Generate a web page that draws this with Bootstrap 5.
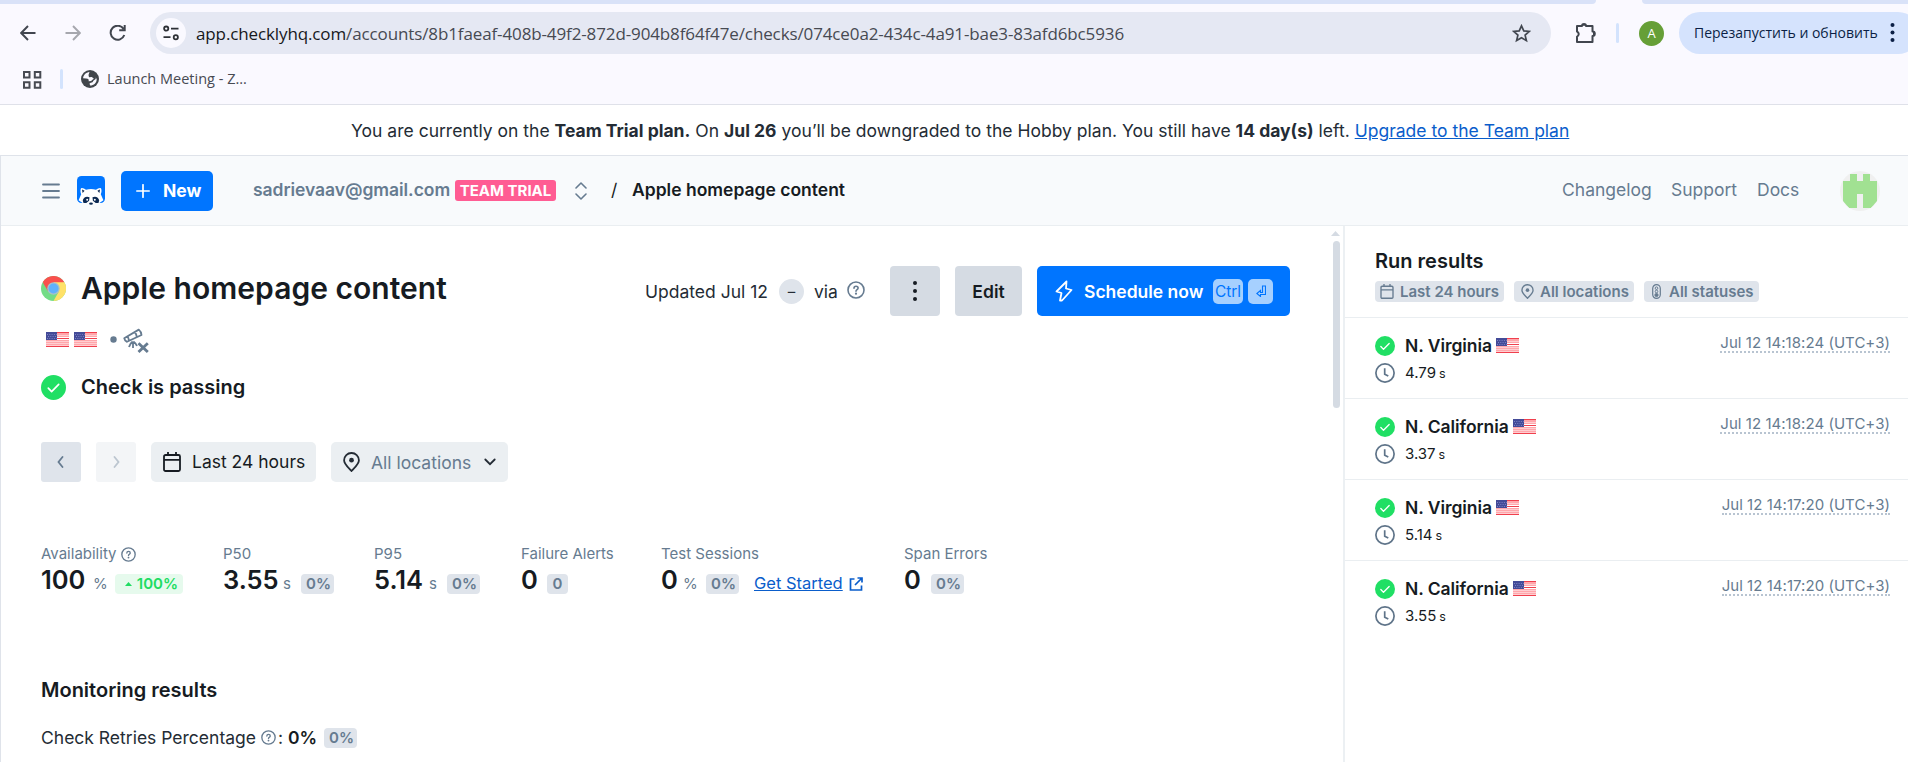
<!DOCTYPE html>
<html lang="en">
<head>
<meta charset="utf-8">
<title>Apple homepage content</title>
<link href="https://cdn.jsdelivr.net/npm/bootstrap@5.3.0/dist/css/bootstrap.min.css" rel="stylesheet">
<style>
:root{--ink:#161b22;--muted:#667b90;--blue:#0075ff;--link:#0a5dcb;--chip:#dfe4eb;--line:#eaeef1}
html,body{height:100%}
body{font-family:Inter,"Liberation Sans",sans-serif;font-size:17.5px;line-height:25px;color:#242c35;background:#fff;overflow:hidden;white-space:nowrap}
svg{display:block;flex:none}
a{color:var(--link)}
.ui{font-family:"Open Sans","Noto Sans",sans-serif}
.tabstrip{height:4px;background:#faf9ff}
.tabstrip span{background:#d9e2f8;height:4px}
.browser{background:#faf9ff;height:105px;border-bottom:1px solid #dfe1e9}
.tools{height:58px;padding-top:8px}
.omni{margin-left:150px;width:1401px;height:42px;background:#e5e8f3;border-radius:21px;padding:0 20px 0 6px}
.omni-btn{width:30px;height:30px;border-radius:50%;background:#faf9ff}
.url{margin-left:10px;font-size:17px;letter-spacing:-.12px;color:#474a52}
.url b{font-weight:400;color:#17181c}
.vbar{width:3px;height:20px;border-radius:2px;background:#d3e3fd}
.who{width:25px;height:25px;border-radius:50%;background:#669f37;color:#fff;font-size:13px}
.restart{width:240px;height:42px;border-radius:21px;background:#d5e3fd;color:#0b1f45;font-size:14px;padding-left:15px;margin-right:-11px}
.marks{height:42px;font-size:14.5px;color:#474a52}
.trial{height:51px;border-bottom:1px solid #dfe3ea}
.frame{border-left:1px solid #dfe3ea;height:606px}
.topbar{height:70px;background:#f8fafc;border-bottom:1px solid var(--line)}
.topbar .crumb{margin-top:-2px}
.btn-b{background:var(--blue);color:#fff;font-weight:700;border-radius:5px}
.tag{background:#ff5c93;color:#fff;font-weight:700;font-size:15px;line-height:21px;height:21px;border-radius:3px;width:101px;text-align:center}
.muted{color:var(--muted)}
.ink{color:var(--ink)}
.sb{font-weight:600}
.mainpane{width:1344px;border-right:2px solid #ecf0f3;height:536px}
.work{width:1249px;margin-left:40px}
.h-title{font-size:30px;line-height:36px;font-weight:600;color:var(--ink);letter-spacing:.03px}
.h-sub{font-size:20px;line-height:25px;font-weight:600;color:var(--ink)}
.b-gray{height:50px;background:#d5dbe3;border-radius:4px;color:var(--ink);font-weight:600}
.b-run{height:50px;width:253px;padding-left:18px}
.keycap{height:25px;background:#a6d0ff;color:var(--blue);border-radius:5px;font-size:15.5px;font-weight:400}
.dash{width:25px;height:25px;border-radius:50%;background:var(--chip);font-size:15px}
.sq{width:40px;height:40px;border-radius:3px}
.pick{height:40px;background:#ebeff2;border-radius:5px}
.lbl{font-size:15px;line-height:20px;height:20px;color:var(--muted)}
.val{font-size:25.5px;line-height:30px;font-weight:600;color:var(--ink)}
.unit{font-size:15px;color:var(--muted)}
.chip{background:var(--chip);color:var(--muted);font-weight:600;font-size:15px;line-height:20px;height:20px;border-radius:4px;padding:0 5px;text-align:center}
.chip-g{background:#e6faed;color:#20dc62;padding-right:5px}
.track{width:13px;padding-top:5px}
.thumb{width:7px;height:167px;border-radius:4px;background:#d5dbe3}
.run{height:81px;border-top:1px solid var(--line);padding:18px 18px 0 30px}
.fchip{background:var(--chip);color:var(--muted);font-weight:600;font-size:15px;height:21px;border-radius:4px;padding:0 5px}
.stamp{font-size:15px;line-height:14px;color:var(--muted);padding-bottom:1px;border-bottom:2px dotted #b8c4d1;height:17px;letter-spacing:.04px}
</style>
</head>
<body>
<svg width="0" height="0" class="position-absolute">
<defs>
<symbol id="us" viewBox="0 0 23 15"><path fill="#ffa6ab" d="M0 0h23v15H0z"/><path stroke="#fff" stroke-opacity=".45" d="M0 3.500h23M0 9.500h23M0 11.500h23M0 13.500h23"/><path stroke="#f0404e" d="M0 .5h23M0 6.500h23M0 14.500h23"/><path stroke="#fff" d="M0 5.500h23M0 7.500h23"/><path fill="#444b98" d="M0 0h11v8H0z"/><path stroke="#7c83c4" stroke-dasharray="1 1.300" d="M1 2.500h10M2 4.500h9M1 6.500h10"/></symbol>
<symbol id="ok" viewBox="0 0 24 24"><circle cx="12" cy="12" r="12" fill="#20df64"/><path d="M7 12.600l3.200 3.400L17 9" fill="none" stroke="#fff" stroke-width="1.600" stroke-linecap="round" stroke-linejoin="round"/></symbol>
<symbol id="clock" viewBox="0 0 20 20"><g fill="none" stroke="#5f7489" stroke-width="1.700"><circle cx="10" cy="10" r="9.100"/><path d="M9.700 5.200v6l3.600 1.800"/></g></symbol>
<symbol id="help" viewBox="0 0 18 18"><g fill="none" stroke="#667b90" stroke-width="1.600"><circle cx="9" cy="9" r="8"/><path d="M7 7.200c0-2.600 4.100-2.500 4.100-.1C11.100 8.700 9 8.600 9 10.200" stroke-linecap="round"/></g><circle cx="9" cy="12.700" r="1.100" fill="#667b90"/></symbol>
<symbol id="cal" viewBox="0 0 18 20"><g fill="none" stroke="currentColor" stroke-width="1.800" stroke-linejoin="round"><rect x="1" y="3" width="16" height="16" rx="1.500"/><path d="M1 7.800h16M5 0v4M13 0v4"/></g></symbol>
<symbol id="pin" viewBox="0 0 17 20"><path d="M8.500 1a7.300 7.300 0 0 1 7.400 7.300c0 4.200-4.900 7.700-7.400 10.700C6 16 1.100 12.500 1.100 8.300A7.300 7.300 0 0 1 8.500 1z" fill="none" stroke="currentColor" stroke-width="1.800"/><circle cx="8.500" cy="8.200" r="2.400" fill="currentColor"/></symbol>
</defs>
</svg>

<header class="browser ui">
  <div class="tabstrip d-flex">
    <span style="width:1596px;border-radius:0 0 8px 0"></span><span class="ms-auto" style="width:266px;border-radius:0 0 0 8px"></span>
  </div>
  <div class="tools d-flex position-relative">
    <div class="position-absolute d-flex" style="left:20px;top:21px">
      <svg width="16" height="16" viewBox="0 0 16 16" fill="none" stroke="#41464f" stroke-width="1.900"><path d="M15.500 8H1.500M8 1L1.200 8 8 15"/></svg>
      <svg style="margin-left:29px" width="16" height="16" viewBox="0 0 16 16" fill="none" stroke="#a6a7ae" stroke-width="1.900"><path d="M.5 8h14M8 1l6.800 7L8 15"/></svg>
      <svg style="margin-left:28px" width="18" height="16" viewBox="0 0 18 16" fill="none" stroke="#41464f" stroke-width="2"><path d="M14.600 4A7 7 0 1 0 15.300 10M15.700 0v5.300h-5.500"/></svg>
    </div>
    <div class="omni d-flex align-items-center">
      <div class="omni-btn d-flex align-items-center justify-content-center">
        <svg width="16" height="16" viewBox="0 0 16 16" fill="none" stroke="#2d3036" stroke-width="1.800"><circle cx="3.200" cy="3.600" r="2.100"/><path d="M8 3.600h7.500M.5 12.200h7"/><circle cx="12.800" cy="12.200" r="2.100"/></svg>
      </div>
      <div class="url"><b>app.checklyhq.com</b>/accounts/8b1faeaf-408b-49f2-872d-904b8f64f47e/checks/074ce0a2-434c-4a91-bae3-83afd6bc5936</div>
      <svg class="ms-auto" width="19" height="19" viewBox="0 0 19 19" fill="none" stroke="#41464f" stroke-width="1.700"><path d="M9.500 1.800l2.300 5.100 5.500.5-4.200 3.700 1.300 5.500-4.900-2.900-4.900 2.900 1.300-5.500L1.700 7.400l5.500-.5z"/></svg>
    </div>
    <div class="d-flex align-items-center" style="height:42px;margin-left:24px">
      <svg width="22" height="22" viewBox="0 0 22 22"><path d="M2 4h5a2 2 0 0 1 4 0h6.500v5.500a2 2 0 0 1 0 4.500v6H2v-5.300q3.500-2.700 0-5.300z" fill="none" stroke="#41464f" stroke-width="2" stroke-linejoin="round"/><path d="M6.500 3.800a2.800 2.800 0 0 1 5 0zM18 9a2.800 2.800 0 0 1 0 5.500z" fill="#41464f"/></svg>
      <div class="vbar" style="margin-left:19px"></div>
      <div class="who d-flex align-items-center justify-content-center" style="margin-left:20px">A</div>
      <div class="restart d-flex align-items-center" style="margin-left:15px"><span style="width:184px;margin-top:-2px">Перезапустить и обновить</span>
        <svg style="margin-left:12px" width="5" height="20" viewBox="0 0 5 20" fill="#0b1f45"><circle cx="2.500" cy="2" r="2"/><circle cx="2.500" cy="9.500" r="2"/><circle cx="2.500" cy="17" r="2"/></svg>
      </div>
    </div>
  </div>
  <div class="marks d-flex">
    <svg style="margin:9px 0 0 23px" width="19" height="18" viewBox="0 0 19 18" fill="none" stroke="#474a52" stroke-width="2"><path d="M1 1h5.500v5.500H1zM11.800 1h5.500v5.500h-5.500zM1 11.300h5.500v5.500H1zM11.800 11.300h5.500v5.500h-5.500z"/></svg>
    <div class="vbar" style="margin:7px 0 0 18px"></div>
    <svg style="margin:8px 0 0 18px" width="18" height="18" viewBox="0 0 18 18"><circle cx="9" cy="9" r="9" fill="#41464b"/><path d="M8.500 2c-3.500.3-6.200 3-6.400 6.300l3 .2c2.400 0 3 1.200 2.500 2.700l2.700-.2c.5-1.300 1.800-1.300 2.500-2.400L10.700 7 8 7.300 7.500 5zM14.800 7.300c.5 1.700-.8 2.400-2.100 3.200-.9.600-.6 1.800-2 1.900-1.200.1-1.800.5-2.200 1.300l.7 1.900c3.700 0 6.500-3.100 6.500-6.400z" fill="#faf9ff"/></svg>
    <span style="margin:4px 0 0 8px">Launch Meeting - Z...</span>
  </div>
</header>

<div class="trial d-flex align-items-center">
  <div style="margin-left:351px;letter-spacing:.01px">You are currently on the <b>Team Trial plan.</b> On <b>Jul 26</b> you’ll be downgraded to the Hobby plan. You still have <b>14 day(s)</b> left. <a href="#">Upgrade to the Team plan</a></div>
</div>

<div class="frame">
  <nav class="topbar d-flex align-items-center">
    <svg style="margin-left:41px" width="18" height="16" viewBox="0 0 18 16" stroke="#667b90" stroke-width="1.800" stroke-linecap="round"><path d="M1 1.500h16M1 8h16M1 14.500h16"/></svg>
    <svg style="margin-left:17px" width="28" height="29" viewBox="0 0 28 29"><rect width="28" height="27" rx="4.500" fill="#0075ff"/><path d="M4 12.200q2.500-.5 5 1.600 5-1.600 10 0 2.500-2.100 5-1.600c.9 2 .6 4-.2 6l2.600 6-4 2.800H5.600L1.600 24.200l2.600-6c-.8-2-1.100-4-.2-6z" fill="#fff"/><path d="M5 13.500l2.600 1.200-2 2.200zM23 13.500l-2.600 1.200 2 2.200z" fill="#0b2852"/><path d="M5.800 24.500c.5-3 3.500-4.700 6.700-3.200l-.4 3.400-2.800 2.300H6.500zM22.200 24.500c-.5-3-3.500-4.700-6.700-3.200l.4 3.400 2.800 2.300h2.800z" fill="#0b2852"/><circle cx="10.200" cy="23.800" r="1" fill="#fff"/><circle cx="17.800" cy="23.800" r="1" fill="#fff"/><ellipse cx="14" cy="27.600" rx="1.900" ry="1.200" fill="#0b2852"/></svg>
    <div class="btn-b d-flex align-items-center" style="margin-left:16px;width:92px;height:40px;padding-left:15px">
      <svg width="14" height="14" viewBox="0 0 14 14" stroke="#fff" stroke-width="1.700" stroke-linecap="round"><path d="M7 .8v12.400M.8 7h12.400"/></svg><span style="margin-left:13px">New</span>
    </div>
    <div class="muted sb crumb" style="margin-left:40px;width:202px;letter-spacing:-.05px">sadrievaav@gmail.com</div>
    <div class="tag">TEAM TRIAL</div>
    <svg style="margin-left:19px" width="12" height="18" viewBox="0 0 12 18" fill="none" stroke="#667b90" stroke-width="1.600" stroke-linecap="round" stroke-linejoin="round"><path d="M1 6l5-5 5 5M1 12l5 5 5-5"/></svg>
    <div class="ink crumb" style="margin-left:24px;width:21px">/</div>
    <div class="ink sb crumb">Apple homepage content</div>
    <div class="ms-auto d-flex align-items-center muted">
      <span class="crumb" style="width:109px">Changelog</span><span class="crumb" style="width:86px">Support</span><span class="crumb" style="width:83px">Docs</span>
      <svg style="margin-right:28px" width="40" height="40" viewBox="0 0 40 40"><defs><clipPath id="av"><circle cx="20" cy="20" r="20"/></clipPath></defs><g clip-path="url(#av)"><path fill="#f0f0f0" d="M0 0h40v40H0z"/><path fill="#a1e192" d="M3 10h7V3h7v7h6V3h7v7h7v20l-6 7h-8V23h-6v14H9l-6-7z"/></g></svg>
    </div>
  </nav>

  <div class="d-flex">
    <main class="mainpane d-flex">
      <div class="work">
        <div class="d-flex align-items-center" style="margin-top:40px;height:50px">
          <svg style="margin-top:-5px" width="25" height="25" viewBox="0 0 48 48"><circle cx="24" cy="24" r="24" fill="#73dc86"/><path d="M24 24L3.500 11.500A24 24 0 0 1 44.800 12z" fill="#f9504d"/><path d="M24 12h20.800A24 24 0 0 1 24 48l10-18z" fill="#ffe168"/><path d="M3.200 12L14 30l10-18z" fill="#f9504d"/><circle cx="24" cy="24" r="12" fill="#a8c1c8"/><circle cx="24" cy="24" r="9.500" fill="#5fb1fb"/></svg>
          <h1 class="h-title" style="margin:-7px 0 0 15px">Apple homepage content</h1>
          <div class="ms-auto d-flex align-items-center">
            <span style="width:134px">Updated Jul 12</span><span class="dash d-flex align-items-center justify-content-center">–</span><span style="margin-left:10px;width:33px">via</span>
            <svg style="margin:-2px 25px 0 0" width="18" height="18"><use href="#help"/></svg>
            <div class="b-gray d-flex align-items-center justify-content-center" style="width:50px"><svg width="4" height="20" viewBox="0 0 4 20" fill="#161b22"><circle cx="2" cy="2" r="2"/><circle cx="2" cy="10" r="2"/><circle cx="2" cy="18" r="2"/></svg></div>
            <div class="b-gray d-flex align-items-center justify-content-center" style="width:67px;margin:0 15px">Edit</div>
            <div class="btn-b b-run d-flex align-items-center">
              <svg width="18" height="22" viewBox="0 0 18 22" fill="none" stroke="#fff" stroke-width="1.800" stroke-linejoin="round"><path d="M11.500 1.500L1.500 11.500l5 1.500L5 20.500l2 0 9.500-10.500-5.500-1.500z"/></svg>
              <span style="margin-left:11px;width:129px" class="sb">Schedule now</span>
              <span class="keycap d-flex align-items-center justify-content-center" style="width:30px">Ctrl</span>
              <span class="keycap d-flex align-items-center justify-content-center" style="width:25px;margin-left:5px"><svg width="10" height="12" viewBox="0 0 10 12" fill="none" stroke="#0075ff" stroke-width="1.100"><path d="M6.500 1h3v8.500H4.500v2L.8 8.500l3.700-3v2h2z"/></svg></span>
            </div>
          </div>
        </div>
        <div class="d-flex" style="height:25px;margin-top:12px;padding-left:5px">
          <svg width="23" height="15" style="margin-top:4px"><use href="#us"/></svg><svg width="23" height="15" style="margin:4px 0 0 5px"><use href="#us"/></svg>
          <svg style="margin:8px 0 0 13px" width="7" height="7"><circle cx="3.500" cy="3.500" r="3.200" fill="#667b90"/></svg>
          <svg style="margin-left:6px" width="27" height="25" viewBox="0 0 27 25" fill="none" stroke="#667b90" stroke-width="1.800" stroke-linejoin="round"><path d="M1.200 10.200L15.800 1.600q2.500 2 2.700 5.400L4 13.800q-2.400-1-2.800-3.600zM4.700 8.600q1 1.800 1.200 3.800M12 4.400q1.400 1.800 1.700 4.200M10 13.500v6.500M9.600 13.500Q7 15.500 6 19M10.400 13.500q2.600 2 3.600 4.500"/><path stroke-width="2.800" d="M15.500 15.200l9.300 8.800M24.800 15.200l-9.300 8.800"/></svg>
        </div>
        <div class="d-flex align-items-center" style="margin-top:22px;height:25px"><svg width="25" height="25"><use href="#ok"/></svg><span class="h-sub" style="margin-left:15px">Check is passing</span></div>
        <div class="d-flex" style="margin-top:42px">
          <div class="sq d-flex align-items-center justify-content-center" style="background:#dfe4eb"><svg width="8" height="12" viewBox="0 0 8 12" fill="none" stroke="#667b90" stroke-width="1.800" stroke-linecap="round"><path d="M5.500 1l-4 5 4 5"/></svg></div>
          <div class="sq d-flex align-items-center justify-content-center" style="background:#f3f5f7;margin-left:15px"><svg width="8" height="12" viewBox="0 0 8 12" fill="none" stroke="#bcc6d0" stroke-width="1.800" stroke-linecap="round"><path d="M2.500 1l4 5-4 5"/></svg></div>
          <div class="pick ink d-flex align-items-center" style="width:165px;margin-left:15px;padding-left:12px"><svg width="18" height="20"><use href="#cal"/></svg><span style="margin:-2px 0 0 11px">Last 24 hours</span></div>
          <div class="pick d-flex align-items-center" style="width:177px;margin-left:15px;padding-left:12px"><svg width="17" height="20"><use href="#pin"/></svg><span class="muted" style="margin-left:11px;width:113px">All locations</span><svg width="12" height="8" viewBox="0 0 12 8" fill="none" stroke="#242c35" stroke-width="1.800" stroke-linecap="round"><path d="M1.300 1.500L6 6.200l4.700-4.700"/></svg></div>
        </div>

        <section class="d-flex" style="margin-top:62px">
          <div style="width:182px">
            <div class="lbl d-flex align-items-center"><span style="width:80px">Availability</span><svg width="15" height="15" viewBox="0 0 18 18"><use href="#help" width="18" height="18"/></svg></div>
            <div class="d-flex align-items-baseline" style="margin-top:1px"><span class="val" style="width:52px">100</span><span class="unit" style="width:22px">%</span><span class="chip chip-g d-inline-flex align-items-center justify-content-end" style="width:68px;position:relative;top:-3px"><svg style="margin-right:5px" width="7" height="4"><path d="M3.500 0L7 4H0z" fill="#20dc62"/></svg>100%</span></div>
          </div>
          <div style="width:151px"><div class="lbl">P50</div><div class="d-flex align-items-baseline" style="margin-top:1px"><span class="val" style="width:60px">3.55</span><span class="unit" style="width:18px">s</span><span class="chip" style="width:33px">0%</span></div></div>
          <div style="width:147px"><div class="lbl">P95</div><div class="d-flex align-items-baseline" style="margin-top:1px"><span class="val" style="width:55px">5.14</span><span class="unit" style="width:18px">s</span><span class="chip" style="width:33px">0%</span></div></div>
          <div style="width:140px"><div class="lbl">Failure Alerts</div><div class="d-flex align-items-baseline" style="margin-top:1px"><span class="val" style="width:26px">0</span><span class="chip" style="width:21px">0</span></div></div>
          <div style="width:243px"><div class="lbl">Test Sessions</div><div class="d-flex align-items-baseline" style="margin-top:1px"><span class="val" style="width:22px">0</span><span class="unit" style="width:23px">%</span><span class="chip" style="width:33px">0%</span><a href="#" style="margin-left:15px;font-size:16.500px;width:95px">Get Started</a><svg style="position:relative;top:2px" width="14" height="14" viewBox="0 0 14 14" fill="none" stroke="#0a5dcb" stroke-width="1.700"><path d="M5.500 2H1.500v11h11V8.500M6 8l6.500-6.500M8.500 1H13v4.500"/></svg></div></div>
          <div><div class="lbl">Span Errors</div><div class="d-flex align-items-baseline" style="margin-top:1px"><span class="val" style="width:27px">0</span><span class="chip" style="width:33px">0%</span></div></div>
        </section>

        <h2 class="h-sub m-0" style="padding-top:81px">Monitoring results</h2>
        <div class="d-flex align-items-center" style="margin-top:22px"><span style="width:220px">Check Retries Percentage</span><svg width="15" height="15" viewBox="0 0 18 18"><use href="#help" width="18" height="18"/></svg><span style="width:10px;margin-left:2px">:</span><span class="ink sb" style="width:36px">0%</span><span class="chip" style="width:33px">0%</span></div>
      </div>
      <div class="track ms-auto"><svg style="margin:0 0 5px 1px" width="9" height="5"><path d="M4.500 0L9 5H0z" fill="#d5dbe3"/></svg><div class="thumb" style="margin-left:3px"></div></div>
    </main>

    <aside class="flex-fill">
      <div style="height:91px;padding:23px 0 0 30px">
        <h2 class="h-sub m-0">Run results</h2>
        <div class="d-flex" style="margin-top:7px;gap:10px">
          <div class="fchip d-flex align-items-center" style="width:129px"><svg width="14" height="15"><use href="#cal"/></svg><span style="margin-left:6px">Last 24 hours</span></div>
          <div class="fchip d-flex align-items-center" style="width:120px;padding-left:7px"><svg width="13" height="15"><use href="#pin"/></svg><span style="margin-left:6px">All locations</span></div>
          <div class="fchip d-flex align-items-center" style="width:115px;padding-left:8px"><svg width="9" height="15" viewBox="0 0 9 15" fill="none" stroke="#667b90"><rect x=".7" y=".6" width="7.600" height="13.800" rx="3.800" stroke-width="1.200"/><circle cx="4.500" cy="4.200" r="1.300"/><circle cx="4.500" cy="7.500" r="1.300"/><circle cx="4.500" cy="11" r="1.600" fill="#667b90"/></svg><span style="margin-left:8px">All statuses</span></div>
        </div>
      </div>
      <div id="runs"></div>
    </aside>
  </div>
</div>
<script>
const runs=[["N. Virginia","4.79","14:18:24"],["N. California","3.37","14:18:24"],["N. Virginia","5.14","14:17:20"],["N. California","3.55","14:17:20"]];
document.getElementById("runs").innerHTML=runs.map(([loc,t,at])=>`
<div class="run d-flex">
  <div>
    <div class="d-flex align-items-center" style="height:20px"><svg width="20" height="20"><use href="#ok"/></svg><span class="ink sb" style="margin:-2px 4px 0 10px;letter-spacing:-.06px">${loc}</span><svg style="margin-top:-1px" width="23" height="15"><use href="#us"/></svg></div>
    <div class="d-flex align-items-center ink" style="height:20px;margin-top:7px;font-size:15px"><svg width="20" height="20"><use href="#clock"/></svg><span style="margin-left:10px">${t}<span style="font-size:12.500px;margin-left:3px">s</span></span></div>
  </div>
  <div class="stamp ms-auto">Jul 12 ${at} (UTC+3)</div>
</div>`).join("");
</script>
<script src="https://cdn.jsdelivr.net/npm/bootstrap@5.3.0/dist/js/bootstrap.bundle.min.js"></script>
</body>
</html>
